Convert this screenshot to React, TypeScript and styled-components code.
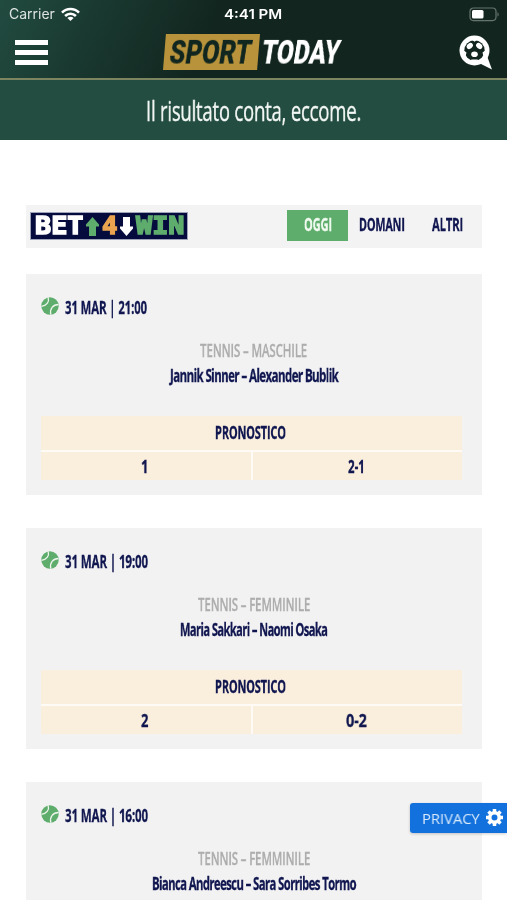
import React, { useLayoutEffect, useRef, useState } from 'react';
import styled, { createGlobalStyle } from 'styled-components';

const navy = '#10164f';
const green = '#5fad6d';

const Global = createGlobalStyle`
  * { box-sizing: border-box; }
  html, body { margin: 0; height: 900px; overflow: hidden; background: #fff; }
  body { font-family: 'Open Sans', 'Noto Sans', sans-serif; }
`;

/* Condensed text: the glyph run is squeezed to the given measure. */
const FitBox = styled.span<{ $w: number }>`
  display: block;
  flex: none;
  width: ${p => p.$w}px;
  white-space: nowrap;
`;
const FitInner = styled.span`
  display: inline-block;
  vertical-align: top;
  transform-origin: 0 50%;
  will-change: transform;
`;
function Fit({ w, skew = 0, children }: { w: number; skew?: number; children: React.ReactNode }) {
  const ref = useRef<HTMLSpanElement>(null);
  const [scale, setScale] = useState(1);
  useLayoutEffect(() => {
    if (ref.current) setScale(w / ref.current.offsetWidth);
  }, [w, children]);
  return (
    <FitBox $w={w}>
      <FitInner ref={ref} style={{ transform: `skewX(${skew}deg) scaleX(${scale})` }}>{children}</FitInner>
    </FitBox>
  );
}

const Screen = styled.div`
  position: relative;
  width: 507px;
  height: 900px;
  overflow: hidden;
  background: #fff;
`;
const Header = styled.header`
  height: 80px;
  border-bottom: 2px solid #7d8460;
  background: linear-gradient(115deg, #224b40 0%, #19382f 20%, #12251f 42%, #12261f 100%);
  color: #fff;
`;
const StatusBar = styled.div`
  display: grid;
  grid-template-columns: 1fr auto 1fr;
  align-items: center;
  height: 27px;
  padding: 0 9px 0 8px;
  font: 600 13px/28px Inter, sans-serif;
`;
const Carrier = styled.div`
  display: flex;
  align-items: center;
  gap: 6px;
  padding-left: 1px;
  color: #dce3e0;
  font-weight: 400;
  font-size: 14px;
`;
const BatteryHolder = styled.div`
  display: flex;
  justify-content: flex-end;
  margin-right: -2px;
`;
const NavBar = styled.div`
  display: grid;
  grid-template-columns: 1fr auto 1fr;
  align-items: center;
  height: 50px;
  padding: 0 14px;
`;
const Burger = styled.button`
  display: flex;
  flex-direction: column;
  gap: 5px;
  width: 34px;
  margin-top: 1px;
  padding: 0 0 0 1px;
  border: 0;
  background: none;
`;
const BurgerLine = styled.span`
  height: 5px;
  background: #fff;
`;
const Logo = styled.div`
  display: flex;
  align-items: center;
  gap: 2px;
  margin-left: -4px;
  font: 900 33px/37px Roboto, sans-serif;
`;
const LogoPlate = styled.div`
  height: 36px;
  padding: 0 6px 0 7px;
  width: 97px;
  clip-path: polygon(3% 0, 100% 0, 97% 100%, 0 100%);
  background: #b8933c;
  color: #10261f;
`;
const SearchHolder = styled.div`
  display: flex;
  justify-content: flex-end;
`;
const Slogan = styled.div`
  display: flex;
  justify-content: center;
  height: 60px;
  background: #244d41;
  color: #f2f7f4;
  font-size: 28px;
  font-weight: 400;
  line-height: 60px;
  letter-spacing: -0.4px;
  -webkit-text-stroke: 0.4px #f2f7f4;
`;
const Content = styled.main`
  display: flex;
  flex-direction: column;
  padding: 65px 25px 0 26px;
`;
const FilterBar = styled.section`
  display: flex;
  align-items: center;
  justify-content: space-between;
  height: 43px;
  padding: 0 4px;
  margin-bottom: 26px;
  background: #f3f3f3;
`;
const BetLogo = styled.div`
  display: flex;
  align-items: center;
  width: 158px;
  height: 28px;
  margin-top: -1px;
  padding: 0 3px 0 4px;
  gap: 3px;
  border: 1px solid #9fa3b8;
  background: #060b3d;
  font: 700 24px/28px 'DejaVu Sans Mono', monospace;
`;
const BetWord = styled.span<{ $c: string }>`
  color: ${p => p.$c};
  -webkit-text-stroke: 1.5px ${p => p.$c};
`;
const Tabs = styled.nav`
  display: flex;
  margin-right: -1px;
`;
const Tab = styled.button<{ $active?: boolean; $w: number }>`
  display: flex;
  justify-content: center;
  width: ${p => p.$w}px;
  height: 31px;
  margin-top: -2px;
  padding: 0;
  border: 0;
  background: ${p => (p.$active ? green : 'transparent')};
  color: ${p => (p.$active ? '#f0faef' : navy)};
  font: 700 18.5px/28px 'Open Sans', sans-serif;
  letter-spacing: -0.2px;
  -webkit-text-stroke: 0.3px currentColor;
`;
const Card = styled.article`
  flex: none;
  height: 221px;
  margin-bottom: 33px;
  padding: 22px 21px 0 15px;
  background: #f2f2f2;
  color: ${navy};
  font-size: 18.5px;
  font-weight: 700;
  letter-spacing: -0.2px;
  -webkit-text-stroke: 0.3px currentColor;
`;
const DateRow = styled.div`
  display: flex;
  align-items: flex-start;
  gap: 6px;
  height: 22px;
  padding-top: 1px;
  line-height: 19px;
`;
const Match = styled.div`
  display: flex;
  flex-direction: column;
  align-items: center;
  width: 425px;
  margin-top: 20px;
`;
const Category = styled.div`
  height: 25px;
  color: #adadad;
  font-weight: 600;
  line-height: 24px;
`;
const Players = styled.div`
  height: 25px;
  font-size: 18px;
  line-height: 24px;
  letter-spacing: -0.9px;
`;
const Forecast = styled.div`
  display: grid;
  grid-template-columns: 1fr 1fr;
  gap: 2px;
  width: 421px;
  margin-top: 28px;
  background: #fefaf5;
`;
const Cell = styled.div<{ $head?: boolean }>`
  display: flex;
  justify-content: center;
  padding-right: 2px;
  grid-column: ${p => (p.$head ? '1 / -1' : 'auto')};
  height: ${p => (p.$head ? 34 : 28)}px;
  background: #faeedd;
  line-height: ${p => (p.$head ? 32 : 28)}px;
`;
const Privacy = styled.button`
  position: absolute;
  right: 0;
  top: 803px;
  display: flex;
  align-items: center;
  gap: 6px;
  width: 97px;
  height: 30px;
  padding: 0 0 1px 12px;
  border: 0;
  border-radius: 3px 0 0 3px;
  background: #1271dc;
  box-shadow: 0 1px 3px #0003;
  color: #d9eafc;
  font: 400 15px/28px 'Open Sans', sans-serif;
`;

const Wifi = () => (
  <svg width="19" height="15" viewBox="0 0 19 15" fill="none" stroke="#fff" strokeWidth="2.6">
    <path d="M1 5.7C5.8.8 13.2.8 18 5.7M4.1 9C7.2 6 11.8 6 14.9 9" />
    <path d="M9.5 14L6.4 11C8.1 9.3 10.9 9.3 12.6 11Z" fill="#fff" stroke="none" />
  </svg>
);
const Battery = () => (
  <svg width="31" height="15" viewBox="0 0 31 15">
    <rect x="1" y="1" width="26" height="12.6" rx="3.5" fill="none" stroke="#66736f" strokeWidth="1.2" />
    <rect x="3" y="3" width="11.5" height="8.6" rx="1.5" fill="#fff" />
    <path d="M28.5 5v4.8q2.5-2.3 0-4.8" fill="#66736f" />
  </svg>
);
const BallSearch = () => (
  <svg width="34" height="35" viewBox="0 0 34 35">
    <path d="M28 21L33 34.5L20 28Z" fill="#fff" />
    <circle cx="15.5" cy="15.5" r="15" fill="#fff" />
    <circle cx="15.5" cy="15.5" r="10.2" fill="#12261f" />
    <g fill="#fff">
      <ellipse cx="10.8" cy="11" rx="3.4" ry="2.6" transform="rotate(-40 10.8 11)" />
      <ellipse cx="20.2" cy="11" rx="3.4" ry="2.6" transform="rotate(40 20.2 11)" />
      <ellipse cx="15.5" cy="19.2" rx="3.3" ry="2.8" />
      <path d="M4 15l3.500 2.500-1 4zM27 15l-3.500 2.500 1 4zM12 4h7l-3.500 2.800zM10 27l2.500-2.500h6l2.500 2.500z" />
    </g>
  </svg>
);
const TennisBall = () => (
  <svg width="18" height="18" viewBox="0 0 18 18">
    <circle cx="9" cy="9" r="8.7" fill={green} />
    <g fill="none" stroke="#edf5ed" strokeWidth="1.3">
      <path d="M7.2.3C8.5 5 5.5 9 .5 9.3" />
      <path d="M17.5 7.5C12 7.5 8.5 12 9.8 17.6" />
    </g>
  </svg>
);
const ArrowSvg = styled.svg`
  flex: none;
`;
const Arrow = ({ down }: { down?: boolean }) => (
  <ArrowSvg width="13" height="19" viewBox="0 0 13 19">
    <path
      d={down ? 'M3 0h7v9.500H13v2L6.500 19 0 11.500v-2h3z' : 'M3 19h7V9.500H13v-2L6.500 0 0 7.500v2h3z'}
      fill={down ? '#fff' : green}
    />
  </ArrowSvg>
);
const Gear = () => (
  <svg width="17" height="17" viewBox="0 0 24 24">
    <g stroke="#fff" strokeWidth="5">
      <path d="M12 0v5M12 19v5M0 12h5M19 12h5M3.500 3.500l3.600 3.600M16.900 16.900l3.600 3.600M3.500 20.500l3.600-3.600M16.900 7.100l3.600-3.600" />
      <circle cx="12" cy="12" r="6.7" fill="none" />
    </g>
  </svg>
);

type Game = {
  time: string; dateW: number; cat: string; catW: number; names: string; namesW: number;
  picks?: { text: string; w: number }[];
};
const games: Game[] = [
  { time: '21:00', dateW: 82, cat: 'MASCHILE', catW: 107, names: 'Jannik Sinner – Alexander Bublik', namesW: 168, picks: [{ text: '1', w: 7 }, { text: '2-1', w: 17 }] },
  { time: '19:00', dateW: 83, cat: 'FEMMINILE', catW: 112, names: 'Maria Sakkari – Naomi Osaka', namesW: 147, picks: [{ text: '2', w: 7 }, { text: '0-2', w: 21 }] },
  { time: '16:00', dateW: 83, cat: 'FEMMINILE', catW: 112, names: 'Bianca Andreescu – Sara Sorribes Tormo', namesW: 204 },
];

export default function App() {
  return (
    <Screen>
      <Global />
      <Header>
        <StatusBar>
          <Carrier><Fit w={46}>Carrier</Fit><Wifi /></Carrier>
          <Fit w={58}>4:41 PM</Fit>
          <BatteryHolder><Battery /></BatteryHolder>
        </StatusBar>
        <NavBar>
          <Burger aria-label="Menu"><BurgerLine /><BurgerLine /><BurgerLine /></Burger>
          <Logo>
            <LogoPlate><Fit w={81} skew={-9}>SPORT</Fit></LogoPlate>
            <Fit w={78} skew={-9}>TODAY</Fit>
          </Logo>
          <SearchHolder><BallSearch /></SearchHolder>
        </NavBar>
      </Header>
      <Slogan><Fit w={215}>Il risultato conta, eccome.</Fit></Slogan>
      <Content>
        <FilterBar>
          <BetLogo>
            <BetWord $c="#fff"><Fit w={48}>BET</Fit></BetWord>
            <Arrow />
            <BetWord $c="#eaa450"><Fit w={15}>4</Fit></BetWord>
            <Arrow down />
            <BetWord $c={green}><Fit w={48}>WIN</Fit></BetWord>
          </BetLogo>
          <Tabs>
            <Tab $active $w={61}><Fit w={28}>OGGI</Fit></Tab>
            <Tab $w={68}><Fit w={46}>DOMANI</Fit></Tab>
            <Tab $w={63}><Fit w={31}>ALTRI</Fit></Tab>
          </Tabs>
        </FilterBar>
        {games.map(g => (
          <Card key={g.time}>
            <DateRow><TennisBall /><Fit w={g.dateW}>{`31 MAR | ${g.time}`}</Fit></DateRow>
            <Match>
              <Category><Fit w={g.catW}>{`TENNIS – ${g.cat}`}</Fit></Category>
              <Players><Fit w={g.namesW}>{g.names}</Fit></Players>
            </Match>
            {g.picks && (
              <Forecast>
                <Cell $head><Fit w={71}>PRONOSTICO</Fit></Cell>
                {g.picks.map(p => <Cell key={p.text}><Fit w={p.w}>{p.text}</Fit></Cell>)}
              </Forecast>
            )}
          </Card>
        ))}
      </Content>
      <Privacy><Fit w={58}>PRIVACY</Fit><Gear /></Privacy>
    </Screen>
  );
}
